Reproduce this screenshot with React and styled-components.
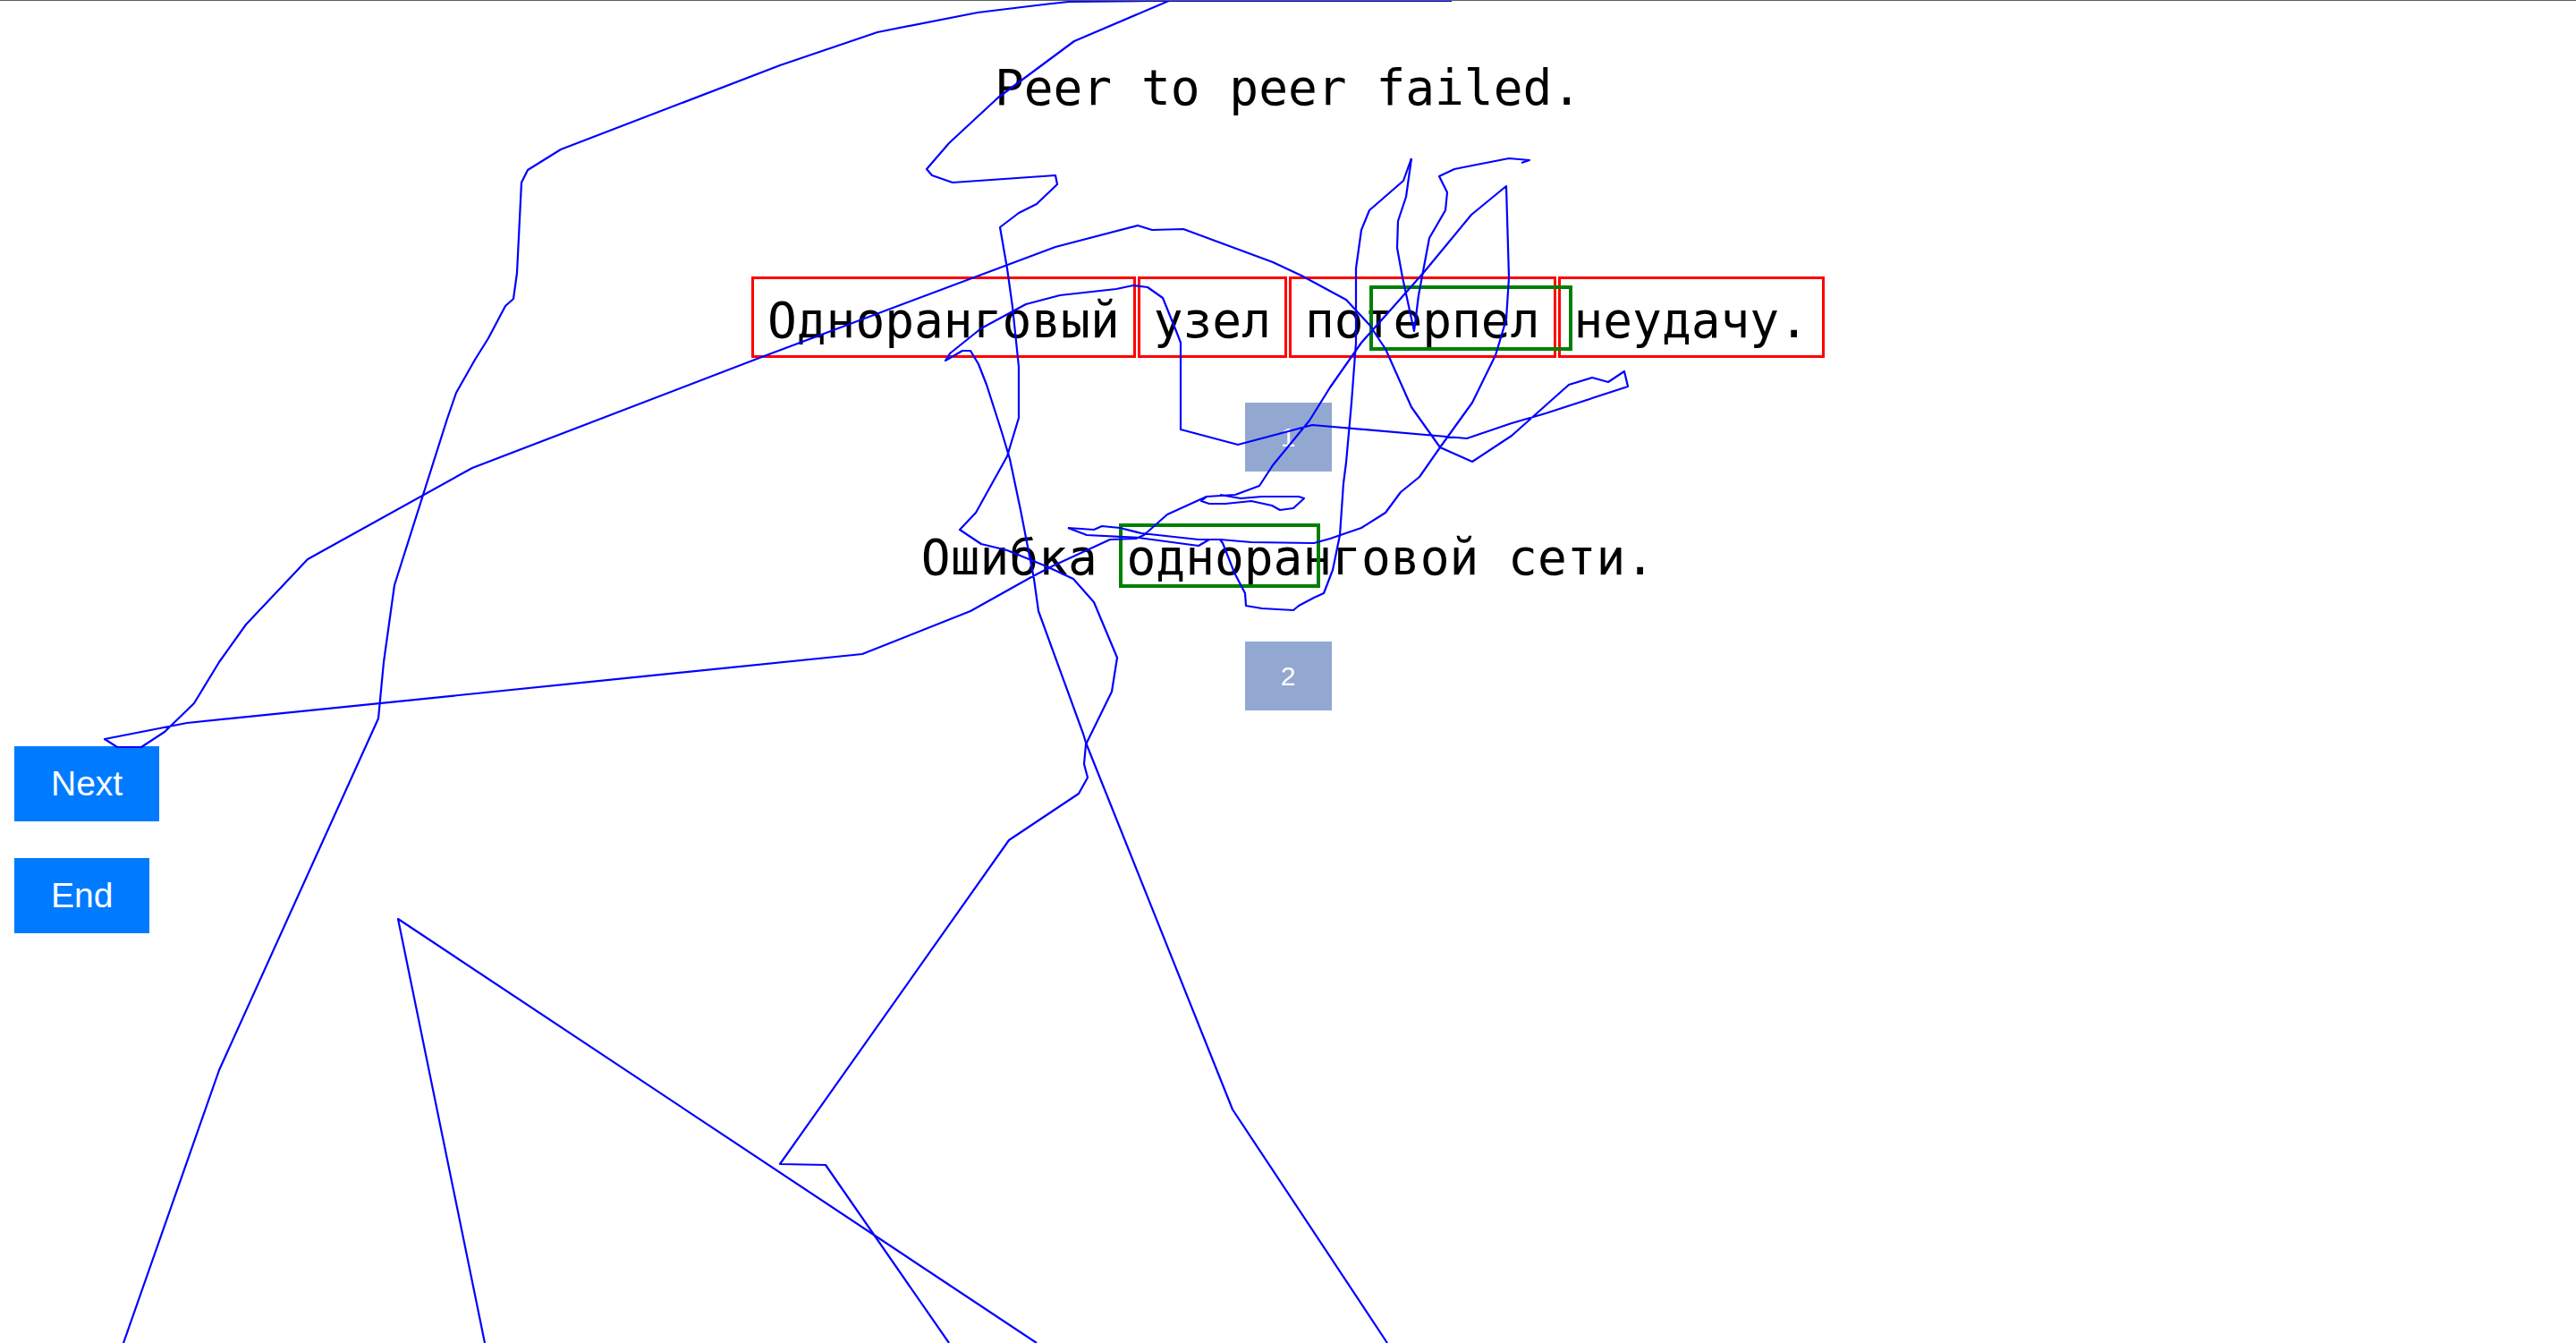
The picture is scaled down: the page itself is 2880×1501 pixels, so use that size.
import React from "react";
import styled, { createGlobalStyle } from "styled-components";

const GlobalStyle = createGlobalStyle`
  html, body {
    margin: 0;
    padding: 0;
    background: #ffffff;
  }
`;

// freehand strokes drawn over the page (page coordinates)
const strokes = [
  [
    [1623, 1], [1287, 1], [1195, 2], [1167, 5], [1093, 14], [981, 36], [872, 73],
    [627, 167], [590, 190], [583, 204], [578, 305], [574, 334], [565, 342],
    [546, 378], [531, 402], [510, 439], [500, 468], [441, 654], [429, 740],
    [423, 803], [245, 1196], [138, 1501],
  ],
  [
    [1309, 0], [1201, 46], [1116, 109], [1061, 160], [1036, 189], [1042, 196],
    [1065, 204], [1180, 196], [1182, 206], [1159, 228], [1139, 238], [1118, 254],
    [1126, 300], [1132, 343], [1139, 410], [1139, 467], [1126, 510], [1091, 573],
    [1073, 592], [1097, 608], [1126, 615], [1170, 633], [1200, 647], [1223, 673],
    [1249, 735], [1243, 773], [1214, 832], [1212, 854], [1216, 869], [1206, 887],
    [1128, 939], [872, 1301], [923, 1302], [1061, 1501],
  ],
  [
    [1194, 590], [1223, 592], [1232, 588], [1252, 590], [1276, 596], [1340, 603],
    [1364, 603], [1399, 606], [1469, 607], [1487, 602], [1522, 590], [1549, 573],
    [1566, 550], [1587, 533], [1610, 500], [1646, 450], [1672, 397], [1684, 357],
    [1687, 310], [1684, 208], [1645, 240], [1593, 303], [1563, 337], [1522, 383],
    [1487, 433], [1464, 470], [1423, 520], [1408, 543], [1381, 553], [1349, 555],
    [1305, 575], [1279, 598], [1270, 602], [1241, 603], [1176, 633], [1153, 645],
    [1085, 683], [964, 731], [209, 808], [117, 826], [131, 835], [158, 835],
    [184, 818], [217, 786], [245, 740], [275, 698], [344, 625], [528, 523],
    [849, 400], [1180, 276], [1272, 252], [1288, 257], [1323, 256], [1423, 293],
    [1455, 308], [1505, 335], [1531, 363], [1549, 390], [1578, 455], [1610, 500],
    [1646, 516], [1690, 487], [1754, 430], [1780, 422], [1798, 427], [1816, 415],
    [1820, 432], [1728, 462], [1690, 473], [1640, 490], [1467, 475], [1384, 497],
    [1320, 480], [1320, 383], [1315, 370], [1300, 333], [1283, 321], [1267, 319],
    [1248, 323], [1185, 330], [1147, 340], [1097, 367], [1062, 395], [1057, 403],
    [1076, 392], [1085, 392], [1094, 407], [1103, 430], [1120, 483], [1129, 513],
    [1141, 570], [1156, 647], [1161, 683], [1211, 820], [1214, 830], [1378, 1240],
    [1551, 1501],
  ],
  [[542, 1501], [445, 1027], [1159, 1501]],
  [
    [1578, 177], [1569, 202], [1531, 235], [1522, 257], [1516, 300], [1516, 383],
    [1511, 450], [1505, 517], [1502, 540], [1498, 598], [1490, 637], [1480, 663],
    [1469, 668], [1452, 677], [1446, 682], [1411, 680], [1393, 677], [1392, 663],
    [1380, 640], [1367, 607], [1364, 603],
  ],
  [
    [1578, 177], [1572, 220], [1563, 247], [1562, 277], [1568, 310], [1581, 370],
    [1586, 330], [1598, 266], [1616, 235], [1618, 215], [1609, 197], [1626, 189],
    [1646, 185], [1687, 177], [1710, 179], [1701, 182],
  ],
  [
    [1349, 555], [1343, 560], [1352, 563], [1370, 563], [1399, 560], [1422, 565],
    [1431, 570], [1446, 568], [1458, 557], [1452, 555], [1411, 555], [1387, 557],
    [1364, 553],
  ],
  [[1194, 590], [1215, 598], [1273, 601], [1340, 610], [1352, 603], [1364, 603]],
];

const words = ["Одноранговый", "узел", "потерпел", "неудачу."];

const App = () => {
  return (
    <>
      <GlobalStyle />
      <Page>
        <Stage>
          <Title>Peer to peer failed.</Title>
          <WordRow>
            {words.map((w) => (
              <WordBox key={w}>{w}</WordBox>
            ))}
            <Highlight $left={691} $top={10} $width={227} $height={73} />
          </WordRow>
          <Marker $gap={50}>1</Marker>
          <Sentence>
            Ошибка одноранговой сети.
            <Highlight $left={221} $top={-6} $width={225} $height={72} />
          </Sentence>
          <Marker $gap={62}>2</Marker>
          <Controls>
            <ActionButton>Next</ActionButton>
            <ActionButton>End</ActionButton>
          </Controls>
        </Stage>
        <Scribble viewBox="0 0 2880 1501" width="2880" height="1501">
          {strokes.map((pts, i) => (
            <polyline
              key={i}
              points={pts.map((p) => p.join(",")).join(" ")}
              fill="none"
              stroke="#0000ff"
              strokeWidth="2.2"
              strokeLinejoin="round"
            />
          ))}
        </Scribble>
      </Page>
    </>
  );
};

export default App;

const Page = styled.div`
  position: relative;
  min-height: 1501px;
  box-sizing: border-box;
  border-top: 1px solid #5c5c5c;
  overflow: hidden;
  font-family: "DejaVu Sans Mono", monospace;
  color: #000;
`;

const Stage = styled.div`
  display: flex;
  flex-direction: column;
  align-items: center;
  padding: 0 16px;
`;

const Title = styled.div`
  margin-top: 65px;
  font-size: 54.5px;
  line-height: 64px;
  white-space: pre;
`;

const WordRow = styled.div`
  position: relative;
  display: inline-flex;
  gap: 2px;
  margin-top: 179px;
`;

const WordBox = styled.span`
  display: inline-block;
  border: 3px solid #ff0000;
  padding: 14px 15px 7px;
  font-size: 54.5px;
  line-height: 64px;
  white-space: pre;
`;

const Highlight = styled.span`
  position: absolute;
  left: ${(p) => p.$left}px;
  top: ${(p) => p.$top}px;
  width: ${(p) => p.$width}px;
  height: ${(p) => p.$height}px;
  box-sizing: border-box;
  border: 4px solid #008000;
  pointer-events: none;
`;

const Marker = styled.div`
  margin-top: ${(p) => p.$gap}px;
  width: 97px;
  height: 77px;
  display: flex;
  align-items: center;
  justify-content: center;
  background: #92a8d1;
  color: #ffffff;
  font-family: "Liberation Sans", Arial, sans-serif;
  font-size: 30px;
`;

const Sentence = styled.div`
  position: relative;
  margin-top: 64px;
  font-size: 54.5px;
  line-height: 64px;
  white-space: pre;
`;

const Controls = styled.div`
  align-self: flex-start;
  display: flex;
  flex-direction: column;
  align-items: flex-start;
  gap: 41px;
  margin-top: 40px;
`;

const ActionButton = styled.button`
  height: 84px;
  padding: 0 41px;
  border: none;
  border-radius: 0;
  background: #007bff;
  color: #ffffff;
  font-family: "Liberation Sans", Arial, sans-serif;
  font-size: 39px;
  cursor: pointer;
`;

const Scribble = styled.svg`
  position: absolute;
  top: -1px;
  left: 0;
  pointer-events: none;
`;
